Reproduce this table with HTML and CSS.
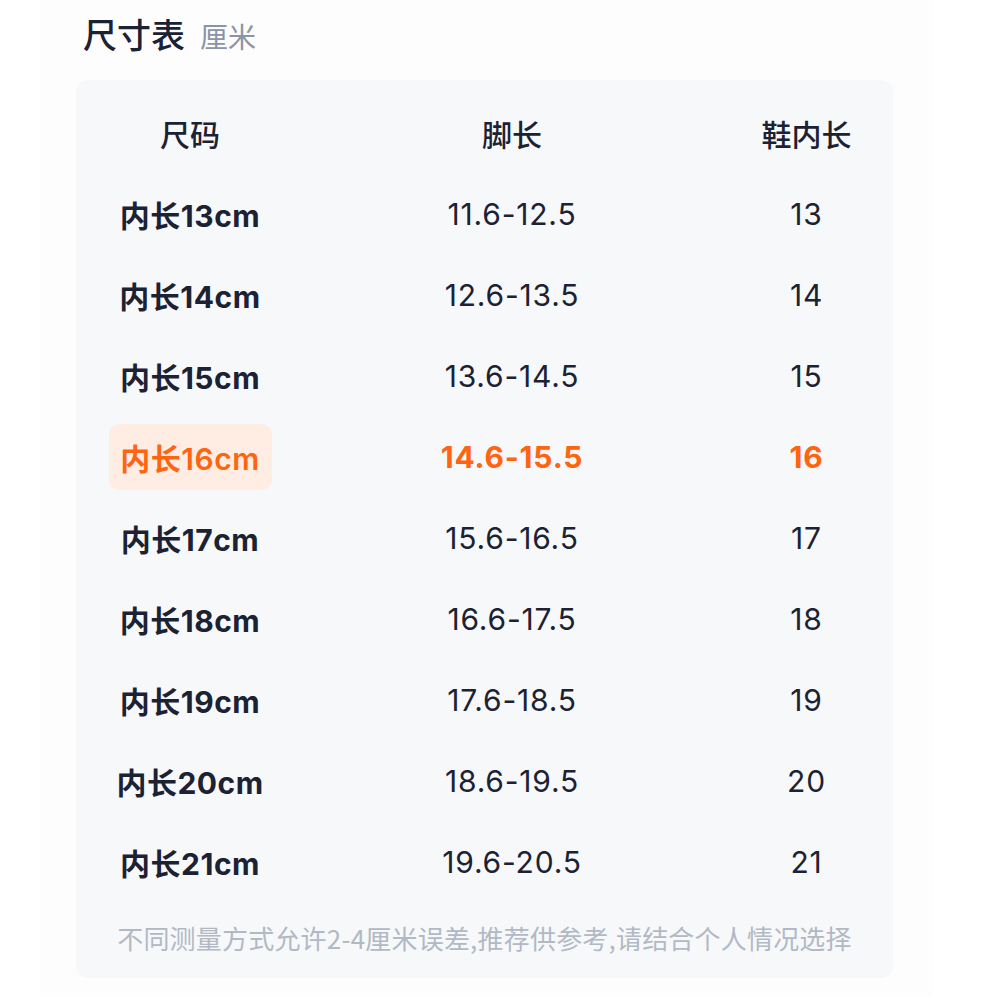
FILE: index.html
```html
<!DOCTYPE html>
<html lang="zh-CN">
<head>
<meta charset="utf-8">
<title>尺寸表</title>
<link rel="stylesheet" href="styles.css">
</head>
<body>
<div class="page">
  <div class="title-row">
    <span class="title">尺寸表</span>
    <span class="unit">厘米</span>
  </div>
  <div class="card">
    <div class="grid">
      <div class="cell head">尺码</div>
      <div class="cell head">脚长</div>
      <div class="cell head">鞋内长</div>

      <div class="cell size"><span class="pill">内长13cm</span></div>
      <div class="cell val">11.6-12.5</div>
      <div class="cell val">13</div>

      <div class="cell size"><span class="pill">内长14cm</span></div>
      <div class="cell val">12.6-13.5</div>
      <div class="cell val">14</div>

      <div class="cell size"><span class="pill">内长15cm</span></div>
      <div class="cell val">13.6-14.5</div>
      <div class="cell val">15</div>

      <div class="cell size active"><span class="pill">内长16cm</span></div>
      <div class="cell val active">14.6-15.5</div>
      <div class="cell val active">16</div>

      <div class="cell size"><span class="pill">内长17cm</span></div>
      <div class="cell val">15.6-16.5</div>
      <div class="cell val">17</div>

      <div class="cell size"><span class="pill">内长18cm</span></div>
      <div class="cell val">16.6-17.5</div>
      <div class="cell val">18</div>

      <div class="cell size"><span class="pill">内长19cm</span></div>
      <div class="cell val">17.6-18.5</div>
      <div class="cell val">19</div>

      <div class="cell size"><span class="pill">内长20cm</span></div>
      <div class="cell val">18.6-19.5</div>
      <div class="cell val">20</div>

      <div class="cell size"><span class="pill">内长21cm</span></div>
      <div class="cell val">19.6-20.5</div>
      <div class="cell val">21</div>
    </div>
    <div class="note">不同测量方式允许2-4厘米误差,推荐供参考,请结合个人情况选择</div>
  </div>
</div>
</body>
</html>
```

FILE: styles.css
```css
html, body {
  margin: 0;
  padding: 0;
  background: #ffffff;
}
body {
  font-family: "Inter", "Noto Sans CJK SC", sans-serif;
  color: #1b2233;
}
.page {
  width: 893px;
  margin-left: 40px;
  background: #fdfdfd;
  box-sizing: border-box;
  height: 997px;
}
.title-row {
  display: flex;
  align-items: baseline;
  gap: 15px;
  padding: 14px 0 0 43px;
  height: 80px;
  box-sizing: border-box;
}
.title {
  font-size: 34px;
  font-weight: 500;
  color: #1b2233;
  line-height: 44px;
}
.unit {
  font-size: 28px;
  color: #8a94a6;
  line-height: 44px;
}
.card {
  margin-left: 36px;
  width: 817px;
  background: #f7f8fa;
  border-radius: 12px;
  padding: 12px 0 0 0;
  height: 898px;
  box-sizing: border-box;
}
.grid {
  display: grid;
  grid-template-columns: 228px 416px 173px;
  grid-auto-rows: 81px;
}
.cell {
  display: flex;
  align-items: center;
  justify-content: center;
  font-size: 30px;
}
.head {
  font-weight: 500;
  color: #1b2233;
}
.size {
  font-weight: 700;
  letter-spacing: 0.5px;
}
.pill {
  display: flex;
  align-items: center;
  justify-content: center;
  width: 163px;
  height: 66px;
  border-radius: 10px;
}
.val {
  font-weight: 400;
  color: #1b2233;
  letter-spacing: 0.8px;
}
.active {
  color: #ff6410;
  font-weight: 700;
}
.size.active .pill {
  background: #ffede4;
  font-weight: 600;
}
.note {
  text-align: center;
  font-size: 26px;
  color: #b2b9c4;
  padding-top: 18px;
  font-family: "Noto Sans CJK SC", sans-serif;
  letter-spacing: 0.2px;
  line-height: 36px;
}
```
